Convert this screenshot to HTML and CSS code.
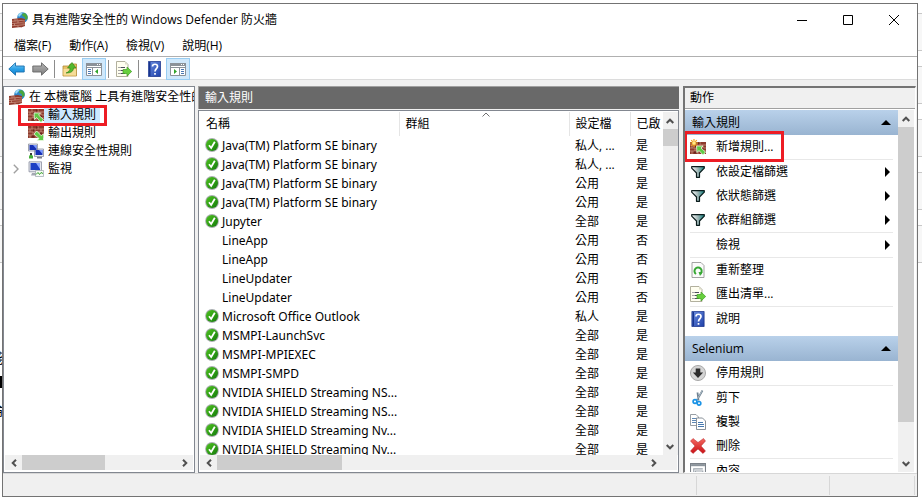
FILE: index.html
```html
<!DOCTYPE html>
<html lang="zh-Hant">
<head>
<meta charset="utf-8">
<title>具有進階安全性的 Windows Defender 防火牆</title>
<link rel="stylesheet" href="styles.css">
</head>
<body>
<svg class="defs" aria-hidden="true">
  <defs>
    <linearGradient id="gGreen" x1="0" y1="0" x2="1" y2="1"><stop offset="0" stop-color="#4fc41f"/><stop offset="1" stop-color="#137a0c"/></linearGradient>
    <linearGradient id="gBlue" x1="0" y1="0" x2="0" y2="1"><stop offset="0" stop-color="#8ed6fb"/><stop offset=".5" stop-color="#2aa0e6"/><stop offset="1" stop-color="#1583cf"/></linearGradient>
    <linearGradient id="gGray" x1="0" y1="0" x2="0" y2="1"><stop offset="0" stop-color="#b5b5b5"/><stop offset="1" stop-color="#7d7d7d"/></linearGradient>
    <linearGradient id="gHelp" x1="0" y1="0" x2="1" y2="1"><stop offset="0" stop-color="#6d8fe0"/><stop offset="1" stop-color="#1d3fa8"/></linearGradient>
    <linearGradient id="gRed" x1="0" y1="0" x2="0" y2="1"><stop offset="0" stop-color="#f46a62"/><stop offset="1" stop-color="#c90f14"/></linearGradient>
    <linearGradient id="gFunnel" x1="0" y1="0" x2="1" y2="0"><stop offset="0" stop-color="#fff"/><stop offset=".5" stop-color="#9fb6b6"/><stop offset="1" stop-color="#0b7d7d"/></linearGradient>
    <symbol id="wall" viewBox="0 0 16 12"><path fill="#8d3b2e" d="M0 0h16v12H0z"/><path stroke="#c9937f" stroke-width=".8" fill="none" d="M0 3h16M0 6h16M0 9h16M4 0v3M10 0v3M2 3v3M7 3v3M13 3v3M5 6v3M11 6v3M2 9v3M8 9v3M14 9v3"/><path fill="#6b251d" d="M5 3.500h1.500v2H5zM8 .5h1.500v2H8zM12 6.500h2v2h-2zM4 9.500h2v2H4z"/></symbol>
    <symbol id="i-app" viewBox="0 0 16 16"><circle cx="10.500" cy="5.500" r="5.300" fill="#2f86c9"/><path fill="#9ad9f5" d="M6 3c1-2 3-2.600 5-2.500L9 3 7 5z"/><path fill="#4aa83c" d="M10 2l3-1 2.500 3v3l-2 1-1-3-2-1z"/><path fill="#913b2d" d="M0 7l9-1v9l-9 1zM9 6l4 1v7l-4 1.500z"/><path stroke="#d3a08e" stroke-width=".7" fill="none" d="M0 9.300l9-.8 4 .5M0 11.500l9-.7 4 .3M0 13.700l9-.7 4-.4M3 7v2.300M6 9v2M2.500 11.500v2M6 13.500v2M5 7v1.500"/></symbol>
    <symbol id="i-in" viewBox="0 0 16 16"><use href="#wall" y="2" width="16" height="12"/><path fill="#5fca45" stroke="#eafbe2" stroke-width=".8" d="M6 6h6.500l-2 2 5 4.500-2.500 3L8.500 10.500 6.500 12.500z"/></symbol>
    <symbol id="i-out" viewBox="0 0 16 16"><use href="#wall" y="1" width="16" height="12"/><path fill="#5fca45" stroke="#eafbe2" stroke-width=".8" d="M15.500 15.500H9l2-2L6 9l2.700-3 4.600 4.800 2.200-2z"/></symbol>
    <symbol id="i-new" viewBox="0 0 16 16"><use href="#wall" y="3" width="16" height="12"/><path fill="#5fca45" stroke="#eafbe2" stroke-width=".8" d="M6.500 7H13l-2 2 4.500 4-2.500 3-4-4.500-2 2z"/><path stroke="#f2a31d" stroke-width="1.200" d="M4 0v8M0 4h8M1.200 1.200l5.600 5.600M6.800 1.200L1.200 6.800"/><circle cx="4" cy="4" r="1.800" fill="#ffe98a"/></symbol>
    <symbol id="i-net" viewBox="0 0 16 16"><path fill="#e4e6ee" stroke="#8b8f9e" stroke-width=".8" d="M.5 1h9v7h-9zM6.500 6h9v7.500h-9z"/><path fill="#1530b5" d="M1.500 2h7v5h-7zM7.500 7h7v5h-7z"/><path fill="#7d9bff" d="M5 2h3.500v4zM11 7h3.500v4z"/><path fill="#7b7f8a" d="M9 14h5v1.500H9z"/><path fill="#43ad36" d="M1 15c0-3 1-3 2-4l2 2v2.500H1z"/><path fill="#3a3a3a" d="M2 10h2v2H2z"/></symbol>
    <symbol id="i-mon" viewBox="0 0 16 16"><path fill="#e4e6ee" stroke="#8b8f9e" stroke-width=".8" d="M1 .8h12.500v10H1z"/><path fill="#1d3fc4" d="M2.500 2H12v7H2.500z"/><path fill="#8da8ff" d="M8 2h4v6z"/><path fill="#a5a8b3" d="M4 12h7v2.500H3z"/><path fill="#f6fbf4" stroke="#9ba4ad" stroke-width=".7" d="M7.500 9.500h8v6h-8z"/><path fill="none" stroke="#36a32b" d="M8 13.500l2-2 1.500 2 1.500-2 2 1"/></symbol>
    <symbol id="i-back" viewBox="0 0 17 14"><path fill="url(#gBlue)" stroke="#1b6fae" stroke-width=".9" stroke-linejoin="round" d="M.8 7L7.500.8v3.200h8.700v6H7.500v3.200z"/></symbol>
    <symbol id="i-fwd" viewBox="0 0 17 14"><path fill="url(#gGray)" stroke="#666" stroke-width=".9" stroke-linejoin="round" d="M16.200 7L9.500.8v3.200H.8v6h8.700v3.200z"/></symbol>
    <symbol id="i-up" viewBox="0 0 16 16"><path fill="#e8c168" stroke="#b48c35" stroke-width=".8" d="M1 5h6l1-2h6.500v12H1z"/><path fill="#f6dc97" d="M1.500 8h12.500v6.500H1.500z"/><path fill="#54b82d" stroke="#2c7f15" stroke-width=".6" d="M4 12c3-1 4-3 4-5H5.500L10 1.500 14 7h-2.500c0 3-2 5-7.500 5z"/></symbol>
    <symbol id="i-pane" viewBox="0 0 18 16"><path fill="#fff" stroke="#8b9299" d="M1.500 2.500h15v12h-15z"/><path fill="#8b9299" d="M1 2h16v3H1z"/><path fill="#fff" d="M12 3h1v1h-1zM14 3h1v1h-1z"/><path stroke="#8b9299" d="M7.500 7v8M1 6.500h16"/><path stroke="#4b79b3" stroke-dasharray="3 1" d="M3 8.500h3.500M3 10.500h3.500M3 12.500h3.500"/><path fill="#2fa32a" d="M13 8v5l-3-2.500z"/></symbol>
    <symbol id="i-pane2" viewBox="0 0 18 16"><path fill="#fff" stroke="#8b9299" d="M1.500 2.500h15v12h-15z"/><path fill="#8b9299" d="M1 2h16v3H1z"/><path fill="#fff" d="M12 3h1v1h-1zM14 3h1v1h-1z"/><path stroke="#8b9299" d="M10.500 7v8M1 6.500h16"/><path stroke="#4b79b3" d="M12 8.500h3M12 10.500h3M12 12.500h3"/><path fill="#2fa32a" d="M5 8v5l3-2.500z"/></symbol>
    <symbol id="i-exp" viewBox="0 0 16 16"><path fill="#fffef0" stroke="#a9a793" stroke-width=".9" d="M.5.5H9l3 3v12H.5z"/><path fill="#dcdcc8" d="M9 .5v3h3z"/><path stroke="#4c4c5c" stroke-dasharray="1 1 6 9" d="M2.500 6.500H9M2.500 9.500H9M2.500 12.500H9"/><path fill="#67cf3e" stroke="#3f9c22" stroke-width=".7" d="M7 8.500h4V6l4.700 4.500L11 15v-2.500H7z"/></symbol>
    <symbol id="i-help" viewBox="0 0 13 16"><path fill="url(#gHelp)" stroke="#1b348a" stroke-width=".8" d="M.4.4h12.200v15.200H.4z"/><path fill="#17348f" d="M1 1h1.500v14H1z"/><path fill="none" stroke="#fff" stroke-width="1.700" d="M4.500 5.500C4.500 2.500 9.500 2.500 9.500 5.500 9.500 7.500 7 7.700 7 10.500M7 12v1.800"/></symbol>
    <symbol id="i-ok" viewBox="0 0 14 14"><circle cx="7" cy="7" r="6.900" fill="#a9aeb0"/><circle cx="7" cy="7" r="6" fill="url(#gGreen)"/><path fill="none" stroke="#fff" stroke-width="1.800" d="M4 7.200l2.200 2.800L9.800 3.800"/></symbol>
    <symbol id="i-fun" viewBox="0 0 14 12"><path fill="url(#gFunnel)" stroke="#0a1c1c" stroke-width="1.200" stroke-linejoin="round" d="M.7.7h12.600v1.500L8.500 7v4.300h-3V7L.7 2.200z"/></symbol>
    <symbol id="i-ref" viewBox="0 0 13 16"><path fill="#fbfbfb" stroke="#9a9a9a" stroke-width=".9" d="M.5.5h9l3 3v12H.5z"/><path fill="none" stroke="#37a834" stroke-width="2" d="M4.500 12A3.600 3.600 0 1 1 9 11.700"/><path fill="#37a834" d="M7 10l4.200.2L8.500 14z"/></symbol>
    <symbol id="i-down" viewBox="0 0 14 14"><circle cx="7" cy="7" r="6.600" fill="#d4d4d4" stroke="#a2a2a2" stroke-width=".8"/><path fill="#2b2b2b" d="M5 3h4v3.500h2.500L7 11.300 2.500 6.500H5z"/></symbol>
    <symbol id="i-cut" viewBox="0 0 12 16"><path stroke="#6f8292" stroke-width="1.800" d="M10.500.5L5 10M5.500 2.500l1 8"/><path stroke="#c6d2da" stroke-width=".7" d="M10 1L5 9.500"/><circle cx="3" cy="11.500" r="1.900" fill="none" stroke="#1a93e6" stroke-width="1.700"/><circle cx="7" cy="13.300" r="1.800" fill="none" stroke="#1a93e6" stroke-width="1.700"/></symbol>
    <symbol id="i-copy" viewBox="0 0 16 16"><path fill="#fff" stroke="#8d949b" stroke-width=".9" d="M.5.5H6L8.500 3v8.500h-8z"/><path stroke="#5f88b5" d="M2 4.500h4M2 6.500h4M2 8.500h4"/><path fill="#fff" stroke="#7c848c" stroke-width=".9" d="M6.500 4h6L15.500 7v8.500h-9z"/><path stroke="#4779b0" d="M8 8.500h5M8 10.500h6M8 12.500h6"/></symbol>
    <symbol id="i-del" viewBox="0 0 16 16"><path fill="url(#gRed)" stroke="#b3242a" stroke-width=".5" stroke-linejoin="round" d="M.5 3L3 .5l5 4L13.500.5 15.500 3 11 8l4.500 5-2.500 2.500-5-4.500-5 4.500L.5 13 5 8z"/></symbol>
    <symbol id="i-prop" viewBox="0 0 15 15"><path fill="#fff" stroke="#7b8188" d="M.5.500h14v14H.5z"/><path fill="#8a929a" d="M1 1h13v2H1z"/><path fill="none" stroke="#9aa2aa" d="M3 5.500h9M3.500 6v6M5 7.500h7v4H5z"/><path fill="#4aa0e0" d="M5 9h2v2H5z"/></symbol>
    <symbol id="i-chev" viewBox="0 0 8 6"><path fill="none" stroke="#505050" stroke-width="2" d="M.7 5L4 1.700 7.300 5"/></symbol>
  </defs>
</svg>
<div class="behind" aria-hidden="true"><span>淺</span><i></i><span>論</span></div>
<div class="window">
  <header class="title">
    <svg class="ico16"><use href="#i-app"/></svg>
    <h1>具有進階安全性的 Windows Defender 防火牆</h1>
    <button aria-label="最小化"><svg viewBox="0 0 10 10"><path d="M0 5.500h10"/></svg></button>
    <button aria-label="最大化"><svg viewBox="0 0 10 10"><path d="M.5.5h9v9h-9z"/></svg></button>
    <button aria-label="關閉"><svg viewBox="0 0 10 10"><path d="M0 0l10 10M10 0L0 10"/></svg></button>
  </header>
  <nav class="menu"><button>檔案(F)</button><button>動作(A)</button><button>檢視(V)</button><button>說明(H)</button></nav>
  <div class="toolbar">
    <button aria-label="上一頁"><svg class="arrow"><use href="#i-back"/></svg></button>
    <button aria-label="下一頁"><svg class="arrow"><use href="#i-fwd"/></svg></button>
    <hr>
    <button aria-label="上一層"><svg class="ico16"><use href="#i-up"/></svg></button>
    <button class="on" aria-label="顯示或隱藏主控台樹狀目錄"><svg class="pane-ico"><use href="#i-pane"/></svg></button>
    <hr>
    <button aria-label="匯出清單"><svg class="ico16"><use href="#i-exp"/></svg></button>
    <hr>
    <button aria-label="說明"><svg class="ico13"><use href="#i-help"/></svg></button>
    <button class="on" aria-label="顯示或隱藏動作窗格"><svg class="pane-ico"><use href="#i-pane2"/></svg></button>
  </div>
  <main class="panes">
    <section class="tree">
      <ul>
        <li class="root"><svg class="ico16"><use href="#i-app"/></svg><span>在 本機電腦 上具有進階安全性的</span></li>
        <li class="sel"><svg class="ico16"><use href="#i-in"/></svg><span>輸入規則</span></li>
        <li><svg class="ico16"><use href="#i-out"/></svg><span>輸出規則</span></li>
        <li><svg class="ico16"><use href="#i-net"/></svg><span>連線安全性規則</span></li>
        <li class="closed"><svg class="exp"  viewBox="0 0 6 10"><path d="M.8.8L5 5 .8 9.200"/></svg><svg class="ico16"><use href="#i-mon"/></svg><span>監視</span></li>
      </ul>
      <div class="hbar"><button aria-label="向左"><svg class="left"><use href="#i-chev"/></svg></button><div class="thumb tree-thumb"></div><button aria-label="向右"><svg class="right"><use href="#i-chev"/></svg></button></div>
    </section>
    <section class="rules">
      <h2>輸入規則</h2>
      <div class="list">
        <div class="view">
          <table>
            <colgroup><col class="c-name"><col class="c-group"><col class="c-prof"><col class="c-on"></colgroup>
            <thead><tr><th>名稱</th><th>群組<svg class="sort" viewBox="0 0 8 5"><path d="M.5 4.500L4 1l3.500 3.500"/></svg></th><th>設定檔</th><th>已啟</th></tr></thead>
            <tbody>
              <tr><td><svg><use href="#i-ok"/></svg>Java(TM) Platform SE binary</td><td></td><td>私人, ...</td><td>是</td></tr>
              <tr><td><svg><use href="#i-ok"/></svg>Java(TM) Platform SE binary</td><td></td><td>私人, ...</td><td>是</td></tr>
              <tr><td><svg><use href="#i-ok"/></svg>Java(TM) Platform SE binary</td><td></td><td>公用</td><td>是</td></tr>
              <tr><td><svg><use href="#i-ok"/></svg>Java(TM) Platform SE binary</td><td></td><td>公用</td><td>是</td></tr>
              <tr><td><svg><use href="#i-ok"/></svg>Jupyter</td><td></td><td>全部</td><td>是</td></tr>
              <tr><td><svg></svg>LineApp</td><td></td><td>公用</td><td>否</td></tr>
              <tr><td><svg></svg>LineApp</td><td></td><td>公用</td><td>否</td></tr>
              <tr><td><svg></svg>LineUpdater</td><td></td><td>公用</td><td>否</td></tr>
              <tr><td><svg></svg>LineUpdater</td><td></td><td>公用</td><td>否</td></tr>
              <tr><td><svg><use href="#i-ok"/></svg>Microsoft Office Outlook</td><td></td><td>私人</td><td>是</td></tr>
              <tr><td><svg><use href="#i-ok"/></svg>MSMPI-LaunchSvc</td><td></td><td>全部</td><td>是</td></tr>
              <tr><td><svg><use href="#i-ok"/></svg>MSMPI-MPIEXEC</td><td></td><td>全部</td><td>是</td></tr>
              <tr><td><svg><use href="#i-ok"/></svg>MSMPI-SMPD</td><td></td><td>全部</td><td>是</td></tr>
              <tr><td><svg><use href="#i-ok"/></svg>NVIDIA SHIELD Streaming NS...</td><td></td><td>全部</td><td>是</td></tr>
              <tr><td><svg><use href="#i-ok"/></svg>NVIDIA SHIELD Streaming NS...</td><td></td><td>全部</td><td>是</td></tr>
              <tr><td><svg><use href="#i-ok"/></svg>NVIDIA SHIELD Streaming Nv...</td><td></td><td>全部</td><td>是</td></tr>
              <tr><td><svg><use href="#i-ok"/></svg>NVIDIA SHIELD Streaming Nv...</td><td></td><td>全部</td><td>是</td></tr>
            </tbody>
          </table>
          <div class="vbar"><button aria-label="向上"><svg><use href="#i-chev"/></svg></button><div class="thumb list-vthumb"></div><button aria-label="向下"><svg class="down"><use href="#i-chev"/></svg></button></div>
        </div>
        <div class="hbar list-h"><button aria-label="向左"><svg class="left"><use href="#i-chev"/></svg></button><div class="thumb list-thumb"></div><button aria-label="向右"><svg class="right"><use href="#i-chev"/></svg></button></div>
      </div>
    </section>
    <aside class="actions">
      <h2>動作</h2>
      <div class="view">
        <div class="items">
          <h3>輸入規則<i class="tri"></i></h3>
          <button class="mark"><svg class="ico16"><use href="#i-new"/></svg>新增規則...</button>
          <hr>
          <button><svg class="fun"><use href="#i-fun"/></svg>依設定檔篩選<i class="sub"></i></button>
          <button><svg class="fun"><use href="#i-fun"/></svg>依狀態篩選<i class="sub"></i></button>
          <button><svg class="fun"><use href="#i-fun"/></svg>依群組篩選<i class="sub"></i></button>
          <hr>
          <button><svg class="ico16"></svg>檢視<i class="sub"></i></button>
          <hr>
          <button><svg class="ico16"><use href="#i-ref"/></svg>重新整理</button>
          <button><svg class="ico16"><use href="#i-exp"/></svg>匯出清單...</button>
          <hr>
          <button><svg class="ico16"><use href="#i-help"/></svg>說明</button>
          <h3 class="second">Selenium<i class="tri"></i></h3>
          <button><svg class="ico16"><use href="#i-down"/></svg>停用規則</button>
          <hr>
          <button><svg class="ico16"><use href="#i-cut"/></svg>剪下</button>
          <button><svg class="ico16"><use href="#i-copy"/></svg>複製</button>
          <button><svg class="ico16"><use href="#i-del"/></svg>刪除</button>
          <hr>
          <button><svg class="ico16"><use href="#i-prop"/></svg>內容</button>
        </div>
        <div class="vbar"><button aria-label="向上"><svg><use href="#i-chev"/></svg></button><div class="thumb act-thumb"></div><button aria-label="向下"><svg class="down"><use href="#i-chev"/></svg></button></div>
      </div>
    </aside>
  </main>
  <footer><span></span><span></span></footer>
</div>
</body>
</html>
```
FILE: styles.css
```css
*, ::before, ::after { box-sizing: border-box; }
body {
  margin: 0;
  height: 100vh;
  padding: 3px 4px 3px 2px;
  overflow: hidden;
  background: linear-gradient(#fff 264px, transparent 264px) 0 264px no-repeat,
    repeating-linear-gradient(#fff 0 13px, #c8c8c8 13px 14px, #f7f7f7 14px 50px, #c8c8c8 50px 51px, #fff 51px 53px);
  font: 12px/18px "Open Sans", "Noto Sans CJK TC", sans-serif;
  color: #000;
}
.defs { position: absolute; width: 0; height: 0; }
button { font: inherit; color: inherit; background: none; border: 0; padding: 0; margin: 0; }
h1, h2, h3 { margin: 0; font: inherit; }
svg { display: block; flex: none; }
.ico16 { width: 16px; height: 16px; }
.ico13 { width: 13px; height: 16px; }
.arrow { width: 17px; height: 14px; }
.pane-ico { width: 18px; height: 16px; }

.behind { position: absolute; left: -11px; top: 348px; width: 13px; overflow: hidden; }
.behind span { display: block; height: 20px; font-size: 14px; line-height: 20px; }
.behind i { display: block; height: 12px; margin: 8px 0 12px; background: #000; }

.window {
  position: relative;
  height: 100%;
  display: flex;
  flex-direction: column;
  border: 1px solid #737373;
  background: #f0f0f0;
}
.title { display: flex; align-items: center; height: 31px; padding-left: 9px; background: #fff; }
.title h1 { flex: 1; margin-left: 4px; }
.title button { width: 46px; height: 28px; display: grid; place-items: center; }
.title button svg { width: 10px; height: 10px; fill: none; stroke: #000; }
.menu { display: flex; gap: 18px; height: 22px; padding-left: 11px; background: #fff; border-bottom: 1px solid #b0b0b0; }
.toolbar { display: flex; align-items: center; height: 23px; padding: 1px 0 0 1px; background: #fff; border-bottom: 1px solid #dcdcdc; }
.toolbar button { width: 24px; height: 22px; display: grid; place-items: center; }
.toolbar .on { background: #cfe8fb; border: 1px solid #99cdf2; }
.toolbar hr { width: 1px; height: 18px; margin: 0 3px 0 2px; border: 0; background: #8c8c8c; }

.panes { flex: 1; min-height: 0; display: flex; gap: 3px; padding: 6px 1px 0 0; }
.tree { width: 192px; display: flex; flex-direction: column; border: 1px solid #828790; background: #fff; }
.tree ul { flex: 1; min-height: 0; margin: 0; padding: 1px 0 0 4px; list-style: none; overflow: hidden; }
.tree li { display: flex; align-items: center; height: 18px; padding-left: 20px; white-space: nowrap; }
.tree li span { padding: 0 4px; }
.tree .root { padding-left: 1px; }
.tree .sel { position: relative; }
.tree .sel span { background: #cce8ff; }
.tree .sel::after { content: ""; position: absolute; left: 10px; top: -1px; width: 89px; height: 21px; border: 3px solid #ed1c24; }
.tree .closed { padding-left: 5px; }
.exp { width: 6px; height: 10px; margin-right: 9px; fill: none; stroke: #a0a0a0; stroke-width: 1.4px; }

.hbar { display: flex; height: 17px; border: solid #fff; border-width: 0 1px 2px; background: #f0f0f0; }
.hbar button { width: 17px; display: grid; place-items: center; }
.hbar button:last-child { margin-left: auto; }
.hbar svg, .vbar svg { width: 8px; height: 6px; }
.left { transform: rotate(-90deg); }
.right { transform: rotate(90deg); }
.down { transform: rotate(180deg); }
.thumb { background: #cdcdcd; }
.tree-thumb { width: 44%; }
.list-thumb { width: 27%; }
.list-h { padding-right: 15px; }
.vbar { width: 17px; flex: none; display: flex; flex-direction: column; border-right: 2px solid #fff; background: #f0f0f0; }
.vbar button { height: 17px; display: grid; place-items: center; }
.vbar button:last-child { margin-top: auto; }
.list-vthumb { height: 17px; }

.rules { flex: 1; min-width: 0; display: flex; flex-direction: column; gap: 1px; }
.rules h2 { height: 23px; padding: 1px 6px; border-top: 1px solid #a0a0a0; border-left: 1px solid #a0a0a0; background: #696969; color: #fff; line-height: 20px; }
.list { flex: 1; min-height: 0; display: flex; flex-direction: column; border: 1px solid #828790; background: #fff; padding-top: 1px; }
.view { flex: 1; min-height: 0; display: flex; overflow: hidden; justify-content: space-between; }
table { table-layout: fixed; border-collapse: collapse; flex: 0 0 auto; width: 530px; margin-right: -67px; align-self: flex-start; }
.list .vbar { position: relative; }
.c-name { width: 200px; }
.c-group { width: 170px; }
.c-prof { width: 61px; }
.c-on { width: 99px; }
th { height: 24px; padding: 0 0 0 6px; text-align: left; font-weight: 400; border-right: 1px solid #e5e5e5; position: relative; }
th:first-child { padding-left: 7px; }
.sort { position: absolute; left: 82px; top: 0; width: 8px; height: 5px; fill: none; stroke: #707070; }
td { height: 19px; padding: 0 0 0 6px; white-space: nowrap; line-height: 19px; }
td:first-child { font-family: "Noto Sans", "Open Sans", sans-serif; }
td svg { float: left; width: 14px; height: 14px; margin: 2px 3px 0 0; }

.actions { width: 233px; display: flex; flex-direction: column; margin-left: 1px; border: 1px solid #fff; border-top: 2px solid #747474; border-left: 2px solid #747474; background: #fff; }
.actions h2 { height: 21px; padding: 1px 5px; background: #f0f0f0; border-bottom: 1px solid #a0a0a0; }
.actions .view { padding-top: 1px; }
.actions .vbar { border-right-width: 1px; }
.items { flex: 1; min-width: 0; }
.items h3 { display: flex; align-items: center; height: 25px; padding: 0 7px; background: linear-gradient(#b9d1ea, #99b4d1); }
.items .second { margin-top: 5px; }
.items button { display: flex; align-items: center; width: 100%; height: 24px; padding-left: 5px; }
.items button svg { margin-right: 10px; }
.items .fun { width: 16px; height: 12px; }
.items hr { height: 1px; margin: 0 5px; border: 0; background: #e8e8e8; }
.tri { margin-left: auto; border: 5px solid transparent; border-top: 0; border-bottom-color: #000; }
.sub { margin: 0 8px 0 auto; border: 5px solid transparent; border-right: 0; border-left-color: #000; }
.items .mark { position: relative; }
.mark::after { content: ""; position: absolute; left: -1px; top: -4px; width: 100px; height: 31px; border: 3px solid #ed1c24; }
.act-thumb { height: 295px; }

footer { height: 23px; display: flex; justify-content: flex-end; padding: 2px 2px 1px 0; border-top: 1px solid #d7d7d7; }
footer span { width: 133px; border-left: 1px solid #d7d7d7; }
footer span:last-child { width: 86px; border-right: 1px solid #d7d7d7; }
```
